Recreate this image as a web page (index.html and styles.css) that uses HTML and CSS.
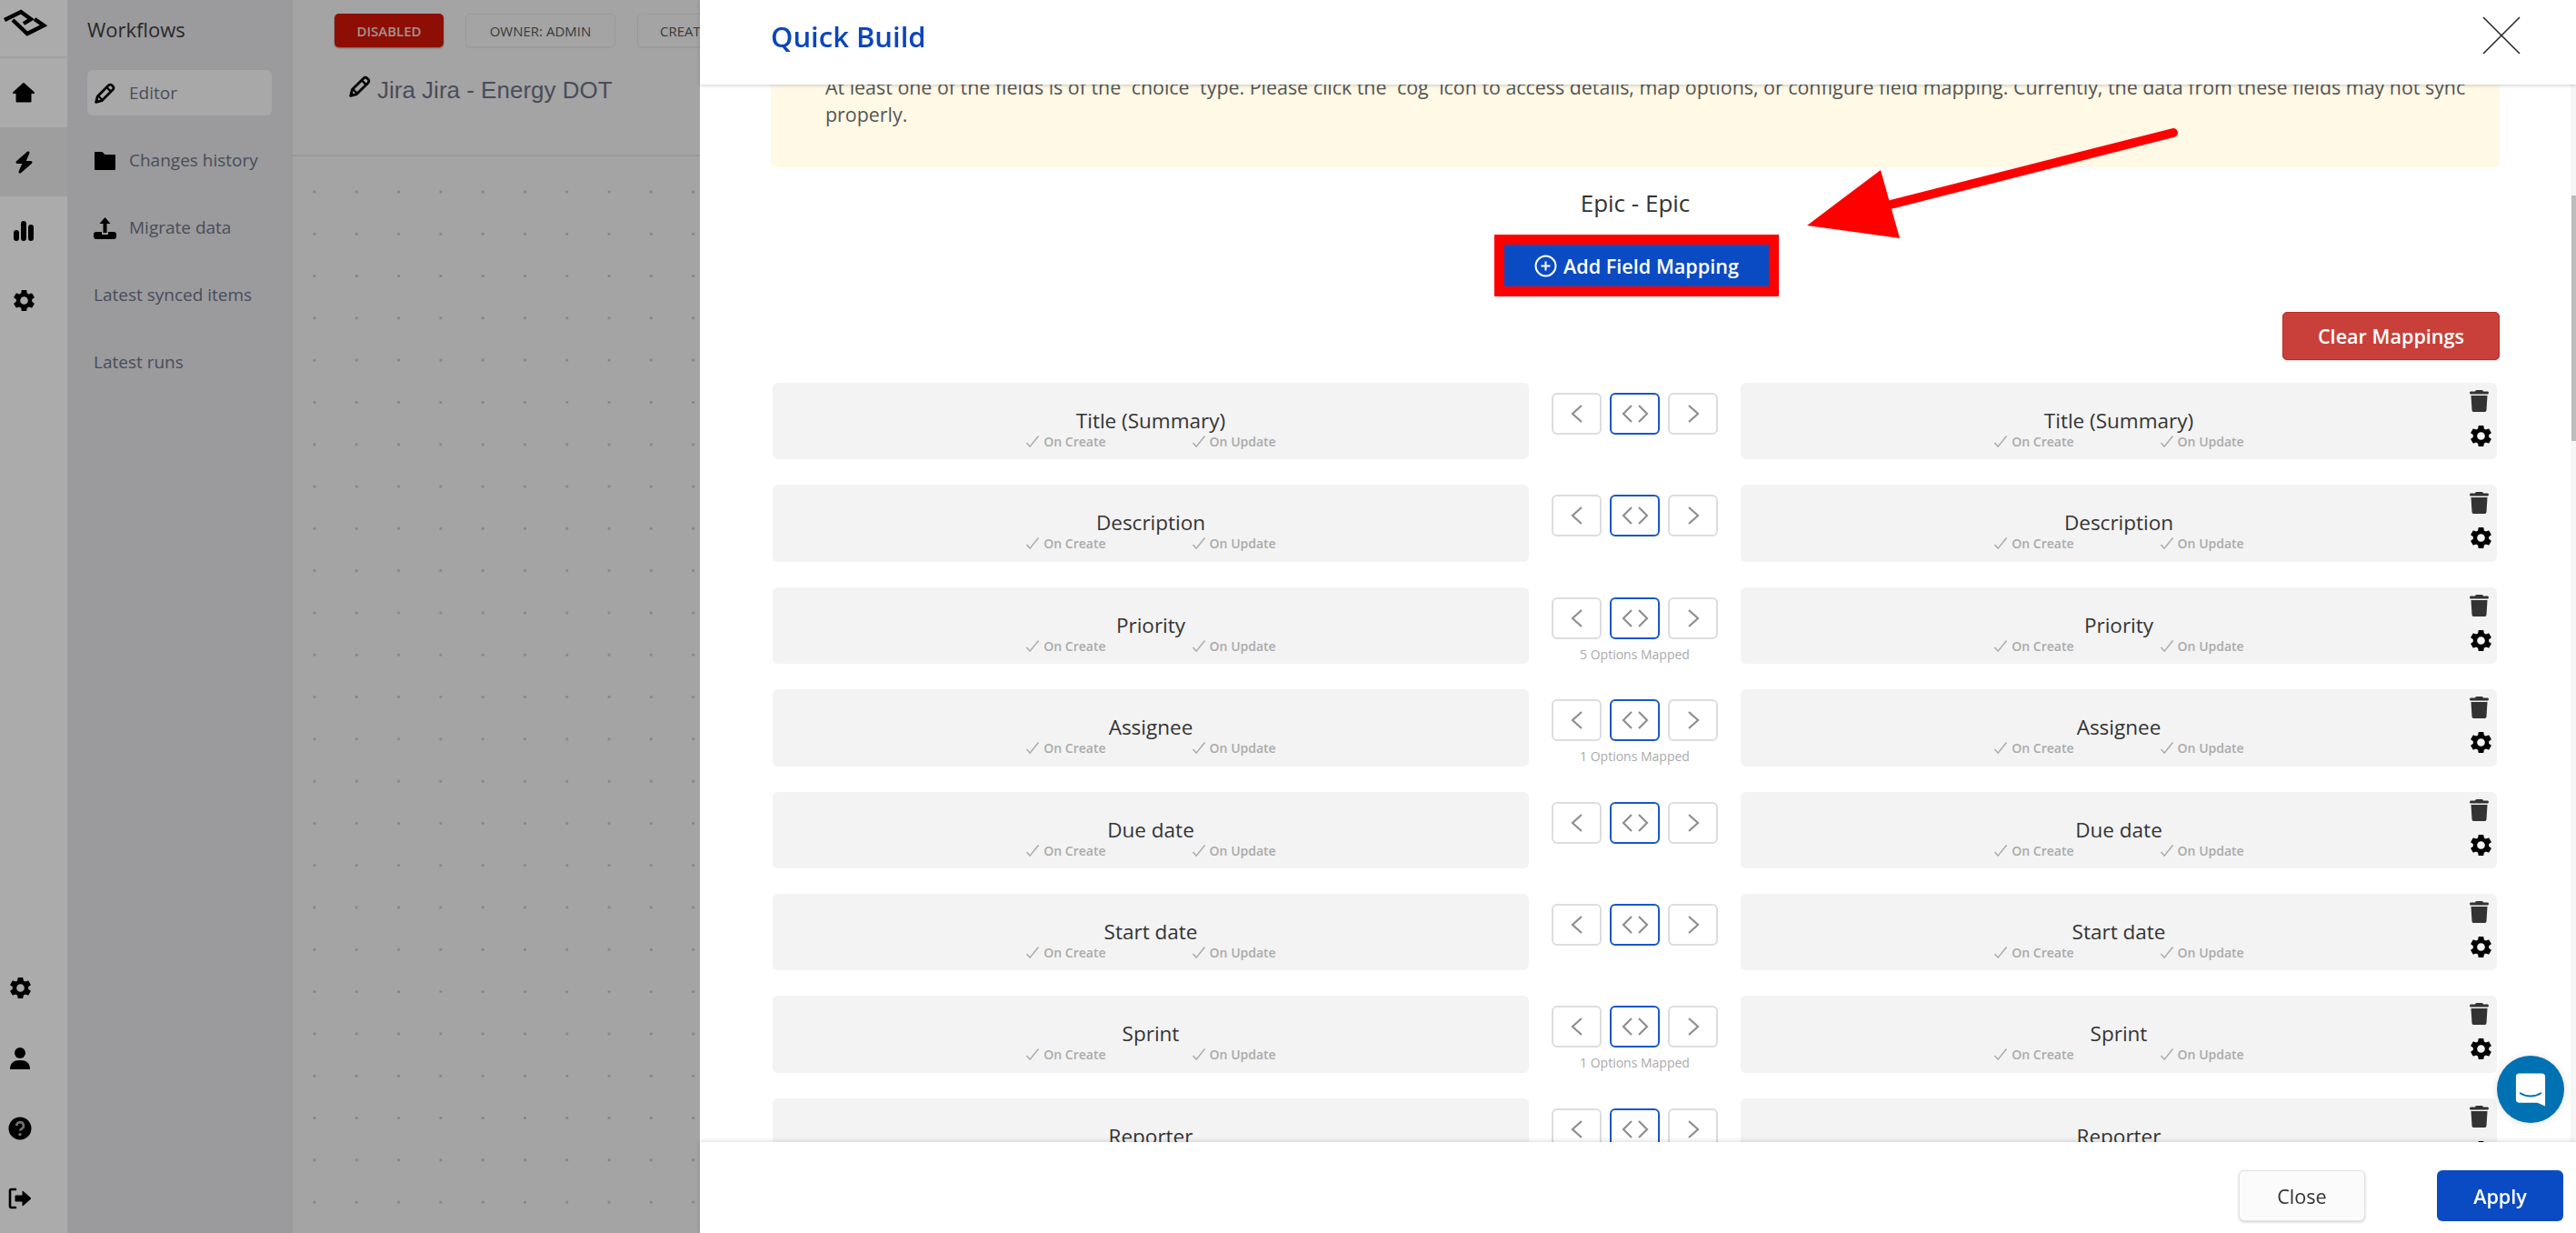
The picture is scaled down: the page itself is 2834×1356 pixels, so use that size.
FILE: index.html
```html
<!DOCTYPE html>
<html lang="en">

<head>
    <meta charset="UTF-8" />
    <meta name="viewport" content="width=device-width, initial-scale=1.0" />
    <title>Quick Build</title>
    <link rel="stylesheet" href="styles.css">
</head>

<body>
    <svg class="sprites" width="0" height="0">
        <symbol id="gear" viewBox="0 0 24 24">
            <path d="M19.14 12.94c.04-.3.06-.61.06-.94 0-.32-.02-.64-.07-.94l2.03-1.58c.18-.14.23-.41.12-.61l-1.92-3.32c-.12-.22-.37-.29-.59-.22l-2.39.96c-.5-.38-1.03-.7-1.62-.94l-.36-2.54c-.04-.24-.24-.41-.48-.41h-3.84c-.24 0-.43.17-.47.41l-.36 2.54c-.59.24-1.13.57-1.62.94l-2.39-.96c-.22-.08-.47 0-.59.22L2.74 8.87c-.12.21-.08.47.12.61l2.03 1.58c-.05.3-.09.63-.09.94s.02.64.07.94l-2.03 1.58c-.18.14-.23.41-.12.61l1.92 3.32c.12.22.37.29.59.22l2.39-.96c.5.38 1.03.7 1.62.94l.36 2.54c.05.24.24.41.48.41h3.84c.24 0 .44-.17.47-.41l.36-2.54c.59-.24 1.13-.56 1.62-.94l2.39.96c.22.08.47 0 .59-.22l1.92-3.32c.12-.22.07-.47-.12-.61l-2.01-1.58zM12 15.6c-1.98 0-3.6-1.62-3.6-3.6s1.62-3.6 3.6-3.6 3.6 1.62 3.6 3.6-1.62 3.6-3.6 3.6z" />
        </symbol>
        <symbol id="trash" viewBox="0 0 448 512">
            <path d="M135.2 17.7L128 32H32C14.3 32 0 46.3 0 64S14.3 96 32 96H416c17.7 0 32-14.3 32-32s-14.3-32-32-32H320l-7.2-14.3C307.4 6.8 296.3 0 284.2 0H163.8c-12.1 0-23.2 6.8-28.6 17.7zM416 128H32L53.2 467c1.6 25.3 22.6 45 47.9 45H346.9c25.3 0 46.3-19.7 47.9-45L416 128z" />
        </symbol>
        <symbol id="pencil" viewBox="0 0 24 24">
            <path d="M2.5 21.5l1.6-6.2L15.8 3.6a2.4 2.4 0 0 1 3.4 0l1.2 1.2a2.4 2.4 0 0 1 0 3.4L8.7 19.9z" fill="none" stroke="#000" stroke-width="2.6" stroke-linejoin="round" />
            <path d="M14 6l4 4M5 15l4 4" fill="none" stroke="#000" stroke-width="2.2" />
            <path d="M2.5 21.5l1-4 3 3z" fill="#000" />
        </symbol>
        <symbol id="check" viewBox="0 0 16 16">
            <path d="M1.500 9l3.600 4.200L14.500 1.500" fill="none" stroke="currentColor" stroke-width="1.500" />
        </symbol>
        <symbol id="chev_l" viewBox="0 0 16 20">
            <path d="M13 1L3 10l10 9" />
        </symbol>
        <symbol id="chev_m" viewBox="0 0 30 20">
            <path d="M11 1L2 10l9 9M19 1l9 9-9 9" />
        </symbol>
        <symbol id="chev_r" viewBox="0 0 16 20">
            <path d="M3 1l10 9-10 9" />
        </symbol>
    </svg>

    <div class="app">
        <aside class="rail">
            <div class="rail_logo">
                <svg width="50" height="32" viewBox="0 0 50 32" fill="none" stroke="#000" stroke-width="4.4">
                    <path d="M3 13L21 4l11 8-8 5" />
                    <path d="M12 13l16 15 18-9-10-7" />
                </svg>
            </div>
            <a class="rail_item">
                <svg width="26" height="24" viewBox="0 0 26 24"><path d="M13 2L2 12h3.5v9.5h15V12H24z" stroke="#000" stroke-width="2" stroke-linejoin="round" /></svg>
            </a>
            <a class="rail_item active">
                <svg width="21" height="25" viewBox="0 0 448 512"><path d="M349.4 44.6c5.9-13.7 1.5-29.7-10.6-38.5s-28.6-8-39.9 1.8l-256 224c-10 8.8-13.6 22.9-8.9 35.3S50.7 288 64 288H175.5L98.6 467.4c-5.9 13.7-1.5 29.7 10.6 38.5s28.6 8 39.9-1.8l256-224c10-8.8 13.6-22.9 8.9-35.3s-16.6-20.7-30-20.7H272.5L349.4 44.6z" /></svg>
            </a>
            <a class="rail_item">
                <svg width="24" height="24" viewBox="0 0 24 24"><rect x="1" y="11" width="6" height="12" rx="3" /><rect x="9" y="1" width="6" height="22" rx="3" /><rect x="17" y="5" width="6" height="18" rx="3" /></svg>
            </a>
            <a class="rail_item">
                <svg width="29" height="29"><use href="#gear" /></svg>
            </a>
            <div class="rail_bottom">
                <a class="rail_foot">
                    <svg width="29" height="29"><use href="#gear" /></svg>
                </a>
                <a class="rail_foot">
                    <svg width="24" height="26" viewBox="0 0 24 26"><circle cx="12" cy="7" r="6" /><path d="M1 25c0-7 4-10 11-10s11 3 11 10z" /></svg>
                </a>
                <a class="rail_foot">
                    <svg width="26" height="26" viewBox="0 0 26 26"><circle cx="13" cy="13" r="12.5" /><path d="M9.3 10a3.8 3.8 0 1 1 5.6 3.3c-1.2.7-1.9 1.2-1.9 2.3" fill="none" stroke="#aaa" stroke-width="2.6" /><circle cx="13" cy="19.6" r="1.7" fill="#aaa" /></svg>
                </a>
                <a class="rail_foot">
                    <svg width="26" height="24" viewBox="0 0 26 24"><path d="M8 2H3.5A1.5 1.5 0 0 0 2 3.500v17A1.5 1.5 0 0 0 3.500 22H8" fill="none" stroke="#000" stroke-width="2.6" stroke-linecap="round" /><path d="M8 9h8V4l9 8-9 8v-5H8z" stroke="#000" stroke-linejoin="round" /></svg>
                </a>
            </div>
        </aside>

        <nav class="sidebar">
            <h2>Workflows</h2>
            <a class="side_item active">
                <svg width="25" height="25"><use href="#pencil" /></svg>
                Editor
            </a>
            <a class="side_item">
                <svg width="25" height="23" viewBox="0 0 25 23"><path d="M2 3h7l3 3h11v15H2z" stroke="#000" stroke-width="2" stroke-linejoin="round" /></svg>
                Changes history
            </a>
            <a class="side_item">
                <svg width="25" height="25" viewBox="0 0 25 25"><path d="M12.500 1L18.500 8H14.500V18H10.500V8H6.500z" /><path d="M3 17h6v3h7v-3h6a3 3 0 0 1 3 3v2a3 3 0 0 1-3 3H3a3 3 0 0 1-3-3v-2a3 3 0 0 1 3-3z" /></svg>
                Migrate data
            </a>
            <a class="side_item plain">Latest synced items</a>
            <a class="side_item plain">Latest runs</a>
        </nav>

        <main class="main">
            <div class="main_header">
                <div class="tags">
                    <span class="tag tag_red">DISABLED</span>
                    <span class="tag">OWNER: ADMIN</span>
                    <span class="tag tag_last">CREATED</span>
                </div>
                <div class="flow_name">
                    <svg width="26" height="26"><use href="#pencil" /></svg>
                    <span>Jira Jira - Energy DOT</span>
                </div>
            </div>
            <div class="canvas"></div>
        </main>
    </div>

    <div class="overlay"></div>

    <section class="modal">
        <header class="modal_header">
            <h1>Quick Build</h1>
            <svg class="close_x" width="42" height="42" viewBox="0 0 42 42"><path d="M1 1l40 40M41 1L1 41" stroke="#222" stroke-width="1.500" /></svg>
        </header>

        <div class="modal_body">
            <div class="scrollbar"><div class="scrollbar_thumb"></div></div>

            <div class="notice">At least one of the fields is of the `choice` type. Please click the `cog` icon to access details, map options, or configure field mapping. Currently, the data from these fields may not sync properly.</div>

            <div class="epic">Epic - Epic</div>

            <div class="add_wrap">
                <button class="add_btn">
                    <svg width="25" height="25" viewBox="0 0 25 25" fill="none" stroke="#fff" stroke-width="2"><circle cx="12.500" cy="12.500" r="11" /><path d="M12.500 7.500v10M7.500 12.500h10" /></svg>
                    Add Field Mapping
                </button>
            </div>

            <div class="clear_wrap"><button class="clear_btn">Clear Mappings</button></div>

            <div class="rows">
                <div class="row">
                    <div class="field">
                        <div class="field_text"><div class="field_name">Title (Summary)</div><div class="field_sub"><span><svg width="16" height="16"><use href="#check" /></svg>On Create</span><span><svg width="16" height="16"><use href="#check" /></svg>On Update</span></div></div>
                    </div>
                    <div class="direction">
                        <div class="dir_btns">
                            <span class="dir_btn"><svg width="16" height="20"><use href="#chev_l" /></svg></span>
                            <span class="dir_btn on"><svg width="30" height="20"><use href="#chev_m" /></svg></span>
                            <span class="dir_btn"><svg width="16" height="20"><use href="#chev_r" /></svg></span>
                        </div>
                    </div>
                    <div class="field">
                        <div class="field_text"><div class="field_name">Title (Summary)</div><div class="field_sub"><span><svg width="16" height="16"><use href="#check" /></svg>On Create</span><span><svg width="16" height="16"><use href="#check" /></svg>On Update</span></div></div>
                        <div class="field_actions"><svg class="trash" width="21" height="24"><use href="#trash" /></svg><svg width="29" height="29"><use href="#gear" /></svg></div>
                    </div>
                </div>

                <div class="row">
                    <div class="field">
                        <div class="field_text"><div class="field_name">Description</div><div class="field_sub"><span><svg width="16" height="16"><use href="#check" /></svg>On Create</span><span><svg width="16" height="16"><use href="#check" /></svg>On Update</span></div></div>
                    </div>
                    <div class="direction">
                        <div class="dir_btns">
                            <span class="dir_btn"><svg width="16" height="20"><use href="#chev_l" /></svg></span>
                            <span class="dir_btn on"><svg width="30" height="20"><use href="#chev_m" /></svg></span>
                            <span class="dir_btn"><svg width="16" height="20"><use href="#chev_r" /></svg></span>
                        </div>
                    </div>
                    <div class="field">
                        <div class="field_text"><div class="field_name">Description</div><div class="field_sub"><span><svg width="16" height="16"><use href="#check" /></svg>On Create</span><span><svg width="16" height="16"><use href="#check" /></svg>On Update</span></div></div>
                        <div class="field_actions"><svg class="trash" width="21" height="24"><use href="#trash" /></svg><svg width="29" height="29"><use href="#gear" /></svg></div>
                    </div>
                </div>

                <div class="row">
                    <div class="field">
                        <div class="field_text"><div class="field_name">Priority</div><div class="field_sub"><span><svg width="16" height="16"><use href="#check" /></svg>On Create</span><span><svg width="16" height="16"><use href="#check" /></svg>On Update</span></div></div>
                    </div>
                    <div class="direction">
                        <div class="dir_btns">
                            <span class="dir_btn"><svg width="16" height="20"><use href="#chev_l" /></svg></span>
                            <span class="dir_btn on"><svg width="30" height="20"><use href="#chev_m" /></svg></span>
                            <span class="dir_btn"><svg width="16" height="20"><use href="#chev_r" /></svg></span>
                        </div>
                        <div class="dir_note">5 Options Mapped</div>
                    </div>
                    <div class="field">
                        <div class="field_text"><div class="field_name">Priority</div><div class="field_sub"><span><svg width="16" height="16"><use href="#check" /></svg>On Create</span><span><svg width="16" height="16"><use href="#check" /></svg>On Update</span></div></div>
                        <div class="field_actions"><svg class="trash" width="21" height="24"><use href="#trash" /></svg><svg width="29" height="29"><use href="#gear" /></svg></div>
                    </div>
                </div>

                <div class="row">
                    <div class="field">
                        <div class="field_text"><div class="field_name">Assignee</div><div class="field_sub"><span><svg width="16" height="16"><use href="#check" /></svg>On Create</span><span><svg width="16" height="16"><use href="#check" /></svg>On Update</span></div></div>
                    </div>
                    <div class="direction">
                        <div class="dir_btns">
                            <span class="dir_btn"><svg width="16" height="20"><use href="#chev_l" /></svg></span>
                            <span class="dir_btn on"><svg width="30" height="20"><use href="#chev_m" /></svg></span>
                            <span class="dir_btn"><svg width="16" height="20"><use href="#chev_r" /></svg></span>
                        </div>
                        <div class="dir_note">1 Options Mapped</div>
                    </div>
                    <div class="field">
                        <div class="field_text"><div class="field_name">Assignee</div><div class="field_sub"><span><svg width="16" height="16"><use href="#check" /></svg>On Create</span><span><svg width="16" height="16"><use href="#check" /></svg>On Update</span></div></div>
                        <div class="field_actions"><svg class="trash" width="21" height="24"><use href="#trash" /></svg><svg width="29" height="29"><use href="#gear" /></svg></div>
                    </div>
                </div>

                <div class="row">
                    <div class="field">
                        <div class="field_text"><div class="field_name">Due date</div><div class="field_sub"><span><svg width="16" height="16"><use href="#check" /></svg>On Create</span><span><svg width="16" height="16"><use href="#check" /></svg>On Update</span></div></div>
                    </div>
                    <div class="direction">
                        <div class="dir_btns">
                            <span class="dir_btn"><svg width="16" height="20"><use href="#chev_l" /></svg></span>
                            <span class="dir_btn on"><svg width="30" height="20"><use href="#chev_m" /></svg></span>
                            <span class="dir_btn"><svg width="16" height="20"><use href="#chev_r" /></svg></span>
                        </div>
                    </div>
                    <div class="field">
                        <div class="field_text"><div class="field_name">Due date</div><div class="field_sub"><span><svg width="16" height="16"><use href="#check" /></svg>On Create</span><span><svg width="16" height="16"><use href="#check" /></svg>On Update</span></div></div>
                        <div class="field_actions"><svg class="trash" width="21" height="24"><use href="#trash" /></svg><svg width="29" height="29"><use href="#gear" /></svg></div>
                    </div>
                </div>

                <div class="row">
                    <div class="field">
                        <div class="field_text"><div class="field_name">Start date</div><div class="field_sub"><span><svg width="16" height="16"><use href="#check" /></svg>On Create</span><span><svg width="16" height="16"><use href="#check" /></svg>On Update</span></div></div>
                    </div>
                    <div class="direction">
                        <div class="dir_btns">
                            <span class="dir_btn"><svg width="16" height="20"><use href="#chev_l" /></svg></span>
                            <span class="dir_btn on"><svg width="30" height="20"><use href="#chev_m" /></svg></span>
                            <span class="dir_btn"><svg width="16" height="20"><use href="#chev_r" /></svg></span>
                        </div>
                    </div>
                    <div class="field">
                        <div class="field_text"><div class="field_name">Start date</div><div class="field_sub"><span><svg width="16" height="16"><use href="#check" /></svg>On Create</span><span><svg width="16" height="16"><use href="#check" /></svg>On Update</span></div></div>
                        <div class="field_actions"><svg class="trash" width="21" height="24"><use href="#trash" /></svg><svg width="29" height="29"><use href="#gear" /></svg></div>
                    </div>
                </div>

                <div class="row">
                    <div class="field">
                        <div class="field_text"><div class="field_name">Sprint</div><div class="field_sub"><span><svg width="16" height="16"><use href="#check" /></svg>On Create</span><span><svg width="16" height="16"><use href="#check" /></svg>On Update</span></div></div>
                    </div>
                    <div class="direction">
                        <div class="dir_btns">
                            <span class="dir_btn"><svg width="16" height="20"><use href="#chev_l" /></svg></span>
                            <span class="dir_btn on"><svg width="30" height="20"><use href="#chev_m" /></svg></span>
                            <span class="dir_btn"><svg width="16" height="20"><use href="#chev_r" /></svg></span>
                        </div>
                        <div class="dir_note">1 Options Mapped</div>
                    </div>
                    <div class="field">
                        <div class="field_text"><div class="field_name">Sprint</div><div class="field_sub"><span><svg width="16" height="16"><use href="#check" /></svg>On Create</span><span><svg width="16" height="16"><use href="#check" /></svg>On Update</span></div></div>
                        <div class="field_actions"><svg class="trash" width="21" height="24"><use href="#trash" /></svg><svg width="29" height="29"><use href="#gear" /></svg></div>
                    </div>
                </div>

                <div class="row">
                    <div class="field">
                        <div class="field_text"><div class="field_name">Reporter</div><div class="field_sub"><span><svg width="16" height="16"><use href="#check" /></svg>On Create</span><span><svg width="16" height="16"><use href="#check" /></svg>On Update</span></div></div>
                    </div>
                    <div class="direction">
                        <div class="dir_btns">
                            <span class="dir_btn"><svg width="16" height="20"><use href="#chev_l" /></svg></span>
                            <span class="dir_btn on"><svg width="30" height="20"><use href="#chev_m" /></svg></span>
                            <span class="dir_btn"><svg width="16" height="20"><use href="#chev_r" /></svg></span>
                        </div>
                    </div>
                    <div class="field">
                        <div class="field_text"><div class="field_name">Reporter</div><div class="field_sub"><span><svg width="16" height="16"><use href="#check" /></svg>On Create</span><span><svg width="16" height="16"><use href="#check" /></svg>On Update</span></div></div>
                        <div class="field_actions"><svg class="trash" width="21" height="24"><use href="#trash" /></svg><svg width="29" height="29"><use href="#gear" /></svg></div>
                    </div>
                </div>
            </div>
        </div>

        <footer class="modal_footer">
            <button class="btn_close">Close</button>
            <button class="btn_apply">Apply</button>
        </footer>

        <!-- annotation drawn over the screenshot -->
        <svg class="arrow" width="420" height="130" viewBox="0 0 420 130">
            <path d="M8 108L89 47l21 75z" fill="#fe0000" />
            <path d="M411 6L96 86" stroke="#fe0000" stroke-width="10" stroke-linecap="round" />
        </svg>
    </section>

    <div class="chat">
        <svg width="34" height="39" viewBox="0 0 36 40">
            <path d="M5 1h26a4 4 0 0 1 4 4v34l-9-4H5a4 4 0 0 1-4-4V5a4 4 0 0 1 4-4z" fill="#fff" />
            <path d="M6 24c7 4.500 17 4.500 24 0" fill="none" stroke="#0071b2" stroke-width="2" stroke-linecap="round" />
        </svg>
    </div>
</body>

</html>
```

FILE: styles.css
```css
* {
    box-sizing: border-box;
}

html,
body {
    margin: 0;
    height: 100%;
    overflow: hidden;
}

body {
    font-family: "Open Sans", sans-serif;
    color: #333;
}

.sprites {
    position: absolute;
}

.app {
    display: flex;
    height: 1356px;
}

/* left rail */
.rail {
    display: flex;
    flex-direction: column;
    flex: none;
    width: 74px;
    background-color: #fff;
}

.rail_logo {
    height: 64px;
    padding: 9px 0 0 2px;
    border-bottom: 2px solid #efefef;
}

.rail_item {
    display: flex;
    align-items: center;
    justify-content: center;
    width: 74px;
    height: 76px;
    padding-right: 22px;
}

.rail_item.active {
    background-color: #ececec;
}

.rail_bottom {
    display: flex;
    flex-direction: column;
    margin-top: auto;
}

.rail_foot {
    display: flex;
    align-items: center;
    justify-content: center;
    height: 77px;
    padding-right: 30px;
}

/* workflows sidebar */
.sidebar {
    flex: none;
    width: 248px;
    padding: 0 22px;
    background-color: #e7e7ea;
    border-right: 1px solid #e2e2e2;
}

.sidebar h2 {
    margin: 0;
    padding-top: 17px;
    height: 77px;
    font-size: 22px;
    line-height: 30px;
    font-weight: 400;
    color: #3c3c3c;
}

.side_item {
    display: flex;
    align-items: center;
    gap: 14px;
    height: 50px;
    margin-bottom: 24px;
    padding-left: 7px;
    border-radius: 6px;
    font-size: 19px;
    font-weight: 500;
    color: #6d7387;
}

.side_item.active {
    background-color: #fbfbfb;
}

.side_item.plain {
    gap: 0;
}

/* workflow page behind the modal */
.main {
    flex: 1;
    min-width: 0;
    background-color: #f5f5f5;
}

.main_header {
    height: 172px;
    padding: 15px 46px;
    border-bottom: 2px solid #e4e4e4;
    overflow: hidden;
}

.tags {
    display: flex;
    gap: 24px;
    white-space: nowrap;
}

.tag {
    display: flex;
    align-items: center;
    justify-content: center;
    width: 165px;
    height: 37px;
    border: 1px solid #e6e6e6;
    border-radius: 5px;
    font-size: 15px;
    font-weight: 500;
    color: #555;
    box-shadow: 0 1px 1px rgba(0, 0, 0, 0.05);
}

.tag_last {
    width: auto;
    padding: 0 24px;
}

.tag_red {
    width: 120px;
    border: 0;
    background-color: #d41608;
    color: #f2d8d4;
    font-weight: 600;
    box-shadow: 0 1px 2px rgba(0, 0, 0, 0.4);
}

.flow_name {
    display: flex;
    align-items: flex-start;
    gap: 6px;
    margin: 32px 0 0 15px;
    font-family: "Liberation Sans", sans-serif;
    font-size: 26px;
    line-height: 30px;
    color: #6d7387;
}

.flow_name svg {
    margin-top: -2px;
}

.canvas {
    height: 1184px;
    background-image: radial-gradient(circle, #c6c6c6 1.2px, transparent 1.7px);
    background-size: 46.3px 46.3px;
    background-position: 0.85px 15.85px;
}

.overlay {
    position: fixed;
    inset: 0;
    background-color: rgba(0, 0, 0, 0.33);
}

/* modal */
.modal {
    position: fixed;
    top: 0;
    right: 0;
    bottom: 0;
    left: 770px;
    display: flex;
    flex-direction: column;
    background-color: #fff;
}

.modal_header {
    position: relative;
    z-index: 2;
    display: flex;
    align-items: flex-start;
    justify-content: space-between;
    flex: none;
    height: 93px;
    padding: 18px 61px 0 78px;
    background-color: #fff;
    box-shadow: 0 1px 4px rgba(0, 0, 0, 0.2);
}

.modal_header h1 {
    margin: 2px 0 0;
    font-size: 31px;
    line-height: 40px;
    font-weight: 600;
    color: #0c46bb;
}

.modal_body {
    position: relative;
    flex: 1;
    min-height: 0;
    padding: 0 84px 0 78px;
    overflow: hidden;
}

.scrollbar {
    position: absolute;
    top: 0;
    right: 0;
    bottom: 0;
    width: 6px;
    background-color: #f6f6f6;
}

.scrollbar_thumb {
    width: 5px;
    height: 270px;
    margin: 122px 0 0 1px;
    background-color: #bcbcbc;
}

.notice {
    margin-top: -32px;
    padding: 20px 18px 43px 60px;
    border-radius: 6px;
    background-color: #fff9e6;
    font-size: 21.4px;
    line-height: 30px;
    color: #555;
}

.epic {
    margin-top: 22px;
    text-align: center;
    font-size: 26px;
    line-height: 34px;
    color: #333;
}

.add_wrap {
    display: flex;
    justify-content: center;
    margin: 18px 0 0 3px;
}

.add_btn {
    display: flex;
    align-items: center;
    justify-content: center;
    gap: 7px;
    width: 313px;
    height: 68px;
    padding: 0;
    border: solid #fe0000;
    border-width: 11px;
    background-color: #0a4bc4;
    color: #fff;
    font-family: inherit;
    font-size: 21.6px;
    font-weight: 600;
}

.clear_wrap {
    display: flex;
    justify-content: flex-end;
    margin-top: 17px;
}

.clear_btn {
    width: 239px;
    height: 53px;
    border: 1px solid #bd2b25;
    border-radius: 5px;
    background-color: #c9403a;
    color: #fff;
    font-family: inherit;
    font-size: 21.6px;
    font-weight: 600;
    box-shadow: 0 1px 2px rgba(0, 0, 0, 0.15);
}

.rows {
    display: flex;
    flex-direction: column;
    gap: 28px;
    margin-top: 25px;
    padding: 0 3px 0 2px;
}

.row {
    display: grid;
    grid-template-columns: 832px 1fr 832px;
    height: 84.4px;
    flex: none;
}

.field {
    display: grid;
    grid-template-columns: 40px 1fr 40px;
    border-radius: 6px;
    background-color: #f3f3f3;
}

.field_text {
    grid-column: 2;
    padding-top: 27px;
    text-align: center;
}

.field_name {
    font-size: 22.5px;
    line-height: 30px;
    font-weight: 500;
    color: #333;
}

.field_sub {
    display: flex;
    justify-content: center;
    gap: 94px;
    font-size: 14px;
    line-height: 16px;
    font-weight: 600;
    color: #aaa;
}

.field_sub span {
    display: flex;
    align-items: center;
    gap: 4px;
}

.field_actions {
    display: flex;
    flex-direction: column;
    align-items: center;
    gap: 12px;
    padding-top: 8px;
}

.field_actions svg {
    flex: none;
    fill: #000;
    margin-left: 4px;
}

.field_actions .trash {
    fill: #333;
    margin-left: 0;
}

.direction {
    padding-top: 11px;
    text-align: center;
}

.dir_btns {
    display: flex;
    justify-content: center;
    gap: 9px;
}

.dir_btn {
    display: flex;
    align-items: center;
    justify-content: center;
    width: 55px;
    height: 46px;
    border: 2px solid #ddd;
    border-radius: 6px;
    background-color: #fff;
}

.dir_btn svg {
    fill: none;
    stroke: #8e8e8e;
    stroke-width: 2.2;
}

.dir_btn.on {
    border-color: #1857cb;
}

.dir_note {
    margin-top: 8px;
    font-size: 14px;
    line-height: 18px;
    color: #aaa;
}

.modal_footer {
    position: relative;
    z-index: 2;
    display: flex;
    align-items: flex-start;
    justify-content: flex-end;
    gap: 79px;
    flex: none;
    height: 100px;
    padding: 31px 14px 0 0;
    background-color: #fff;
    box-shadow: 0 -1px 5px rgba(0, 0, 0, 0.15);
}

.btn_close,
.btn_apply {
    width: 139px;
    height: 56px;
    border-radius: 6px;
    font-family: inherit;
    font-size: 21.6px;
}

.btn_close {
    border: 1px solid #e2e2e2;
    background-color: #fbfbfb;
    color: #333;
    box-shadow: 0 1px 3px rgba(0, 0, 0, 0.2);
}

.btn_apply {
    border: 0;
    background-color: #0a4bc4;
    color: #fff;
    font-weight: 600;
}

.arrow {
    position: absolute;
    top: 140px;
    left: 1210px;
    z-index: 1;
}

.chat {
    position: fixed;
    right: 13px;
    bottom: 121px;
    z-index: 3;
    display: flex;
    align-items: center;
    justify-content: center;
    width: 74px;
    height: 74px;
    border-radius: 50%;
    background-color: #0071b2;
    box-shadow: 0 1px 8px rgba(0, 0, 0, 0.12);
}
```
